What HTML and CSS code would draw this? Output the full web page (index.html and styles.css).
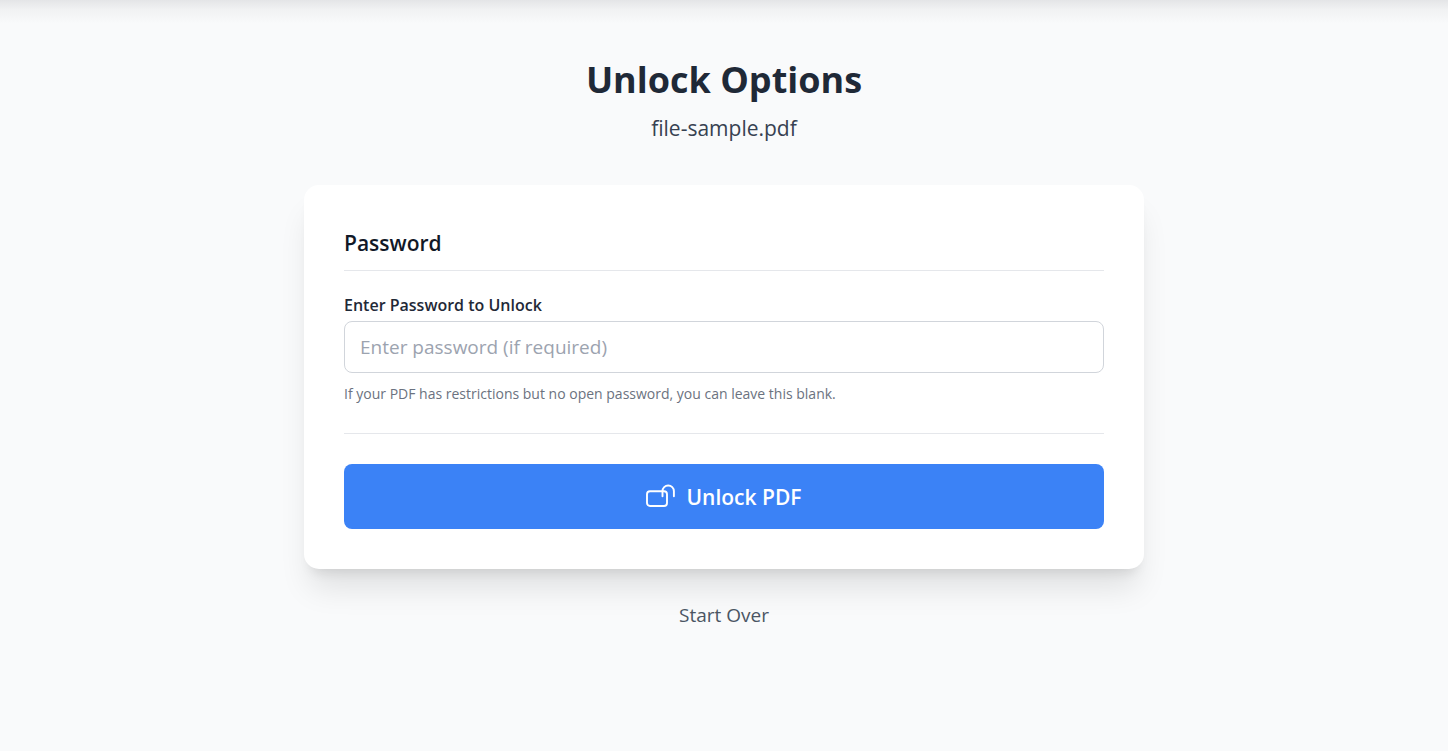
FILE: index.html
```html
<!DOCTYPE html>
<html lang="en">
<head>
<meta charset="utf-8">
<meta name="viewport" content="width=device-width, initial-scale=1">
<title>Unlock Options</title>
<link rel="stylesheet" href="styles.css">
</head>
<body>
<div class="top-shade"></div>
<main class="page">
  <header class="heading">
    <h1 class="title">Unlock Options</h1>
    <p class="file-name">file-sample.pdf</p>
  </header>
  <form class="card">
    <h2 class="section-title">Password</h2>
    <div class="field">
      <label class="label" for="password">Enter Password to Unlock</label>
      <input class="input" id="password" type="password" placeholder="Enter password (if required)">
      <p class="hint">If your PDF has restrictions but no open password, you can leave this blank.</p>
    </div>
    <div class="actions">
      <button class="submit" type="button">
        <svg class="icon" viewBox="0 0 30 30" fill="none" stroke="currentColor" stroke-width="1.9" stroke-linecap="round" stroke-linejoin="round" aria-hidden="true">
          <rect x="1" y="9.3" width="20" height="14.7" rx="3"/>
          <path d="M16.5 14.2V9.2a5.7 5.7 0 0 1 11.4 0v5"/>
        </svg>
        <span>Unlock PDF</span>
      </button>
    </div>
  </form>
  <button class="restart" type="button">Start Over</button>
</main>
</body>
</html>
```
FILE: styles.css
```css
* {
  box-sizing: border-box;
}

body {
  margin: 0;
  min-height: 100vh;
  background: #f9fafb;
  color: #1f2937;
  font-family: "Segoe UI", "Open Sans", "Noto Sans", sans-serif;
}

h1, h2, p {
  margin: 0;
}

button, input {
  font: inherit;
}

.top-shade {
  position: absolute;
  top: 0;
  left: 0;
  right: 0;
  height: 24px;
  background: linear-gradient(#e4e5e7, #f1f2f3 40%, #f9fafb);
}

.page {
  position: relative;
  display: flex;
  flex-direction: column;
  align-items: center;
  max-width: 880px;
  margin: 0 auto;
  padding: 57px 20px 40px;
}

.heading {
  margin-bottom: 40px;
  text-align: center;
}

.title {
  font-size: 36px;
  line-height: 46px;
  font-weight: 700;
}

.file-name {
  margin-top: 8px;
  font-size: 21px;
  line-height: 34px;
  color: #374151;
}

.card {
  width: 100%;
  padding: 40px;
  border-radius: 15px;
  background: #fff;
  box-shadow: 0 25px 31px -6px rgba(0, 0, 0, .1), 0 10px 12px -7px rgba(0, 0, 0, .1);
}

.section-title {
  padding: 2px 0 10px;
  border-bottom: 1px solid #e5e7eb;
  font-size: 21px;
  line-height: 33px;
  font-weight: 600;
  color: #111827;
}

.field {
  margin-top: 20px;
}

.label {
  display: block;
  padding-top: 2px;
  margin-bottom: 4px;
  font-size: 16px;
  line-height: 24px;
  font-weight: 600;
}

.input {
  display: block;
  width: 100%;
  height: 52px;
  padding: 0 15px;
  border: 1px solid #d1d5db;
  border-radius: 8px;
  background: #fff;
  color: #1f2937;
  font-size: 19px;
}

.input::placeholder {
  color: #9ca3af;
  opacity: 1;
}

.hint {
  margin-top: 10px;
  font-size: 14px;
  line-height: 22px;
  color: #6b7280;
}

.actions {
  margin-top: 28px;
  padding-top: 30px;
  border-top: 1px solid #e5e7eb;
}

.submit {
  display: flex;
  align-items: center;
  justify-content: center;
  gap: 10px;
  width: 100%;
  height: 65px;
  padding: 0;
  border: 0;
  border-radius: 8px;
  background: #3b82f6;
  color: #fff;
  font-size: 21px;
  font-weight: 600;
}

.icon {
  width: 30px;
  height: 30px;
}

.restart {
  margin-top: 30px;
  padding: 0;
  border: 0;
  background: none;
  color: #4b5563;
  font-size: 19px;
  line-height: 32px;
}
```
